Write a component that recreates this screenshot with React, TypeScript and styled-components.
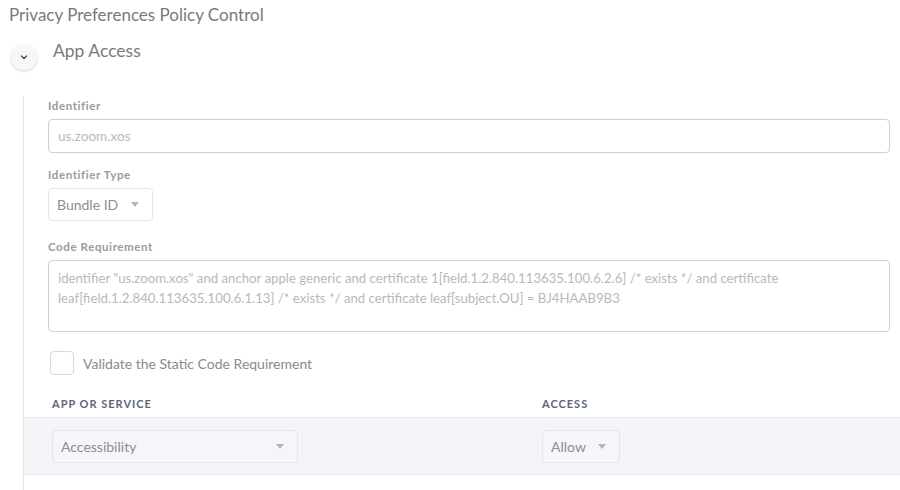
import styled, { createGlobalStyle } from 'styled-components';

const GlobalStyle = createGlobalStyle`
  body {
    margin: 0;
    background: #fff;
    font-family: Lato, 'Open Sans', sans-serif;
    color: #777;
  }
`;

const Page = styled.div`
  width: 900px;
  height: 490px;
  overflow: hidden;
`;

const Title = styled.div`
  padding: 4px 0 0 9px;
  height: 22px;
  font-size: 17px;
  line-height: 22px;
  color: #7a7a7a;
`;

const SectionHead = styled.div`
  display: flex;
  align-items: center;
  gap: 16px;
  margin-top: 16px;
  padding-left: 11px;
  height: 26px;
  span {
    font-size: 17.5px;
    color: #7a7a7a;
    margin-top: -10px;
  }
`;

const Toggle = styled.button`
  width: 26px;
  height: 26px;
  margin-top: 4px;
  border-radius: 50%;
  border: none;
  padding: 0;
  background: #f7f7f8;
  box-shadow: 0 1px 3px rgba(0, 0, 0, 0.18);
  display: flex;
  align-items: center;
  justify-content: center;
  cursor: pointer;
`;

const Panel = styled.div`
  margin: 29px 0 0 23px;
  border-left: 1px solid #e4e4e4;
  padding-top: 2px;
  height: 400px;
`;

const Fields = styled.div`
  padding: 0 10px 0 24px;
`;

const Label = styled.div`
  font-size: 11.5px;
  font-weight: 700;
  letter-spacing: 0.6px;
  color: #9b9b9b;
  height: 14px;
  line-height: 14px;
  margin: 0 0 6px;
`;

const Field = styled.div<{ gap?: number }>`
  margin-bottom: ${p => p.gap ?? 0}px;
`;

const Input = styled.div`
  height: 34px;
  box-sizing: border-box;
  border: 1px solid #cfcfcf;
  border-radius: 4px;
  padding: 0 9px;
  display: flex;
  align-items: center;
  font-size: 13.6px;
  color: #b9b9b9;
`;

const TextArea = styled.div`
  height: 72px;
  box-sizing: border-box;
  border: 1px solid #cfcfcf;
  border-radius: 4px;
  padding: 7px 9px;
  font-size: 13.2px;
  line-height: 20px;
  color: #b9b9b9;
`;

const Select = styled.div<{ w: number; tinted?: boolean }>`
  width: ${p => p.w}px;
  height: 33px;
  box-sizing: border-box;
  border: 1px solid #e6e6e9;
  border-radius: 4px;
  background: ${p => (p.tinted ? '#f5f6f9' : '#fff')};
  padding: 0 13px 0 8px;
  display: flex;
  align-items: center;
  justify-content: space-between;
  font-size: 14px;
  color: #8e8e8e;
  &::after {
    content: '';
    border-left: 4px solid transparent;
    border-right: 4px solid transparent;
    border-top: 5px solid #b5b5b5;
  }
`;

const CheckRow = styled.label`
  display: flex;
  align-items: center;
  gap: 9px;
  margin: 19px 0 0 2px;
  font-size: 14px;
  color: #8a8a8a;
`;

const Box = styled.span`
  width: 24px;
  height: 24px;
  box-sizing: border-box;
  border: 1px solid #d9d9d9;
  border-radius: 4px;
  background: #fff;
`;

const TableHead = styled.div`
  display: grid;
  grid-template-columns: 490px 1fr;
  padding: 22px 0 0 28px;
  height: 20px;
  div {
    font-size: 11px;
    font-weight: 700;
    letter-spacing: 1px;
    color: #5d6579;
  }
`;

const TableRow = styled.div`
  display: grid;
  grid-template-columns: 490px 1fr;
  align-items: center;
  padding-left: 28px;
  height: 56px;
  background: #f4f5f8;
  border-top: 1px solid #e6e8ec;
  border-bottom: 1px solid #e6e8ec;
`;

const Chevron = () => (
  <svg width="10" height="10" viewBox="0 0 10 10" fill="none">
    <path d="M2.5 4l2.5 2.5L7.5 4" stroke="#444" strokeWidth="1.3" strokeLinecap="round" strokeLinejoin="round" />
  </svg>
);

export default function App() {
  return (
    <Page>
      <GlobalStyle />
      <Title>Privacy Preferences Policy Control</Title>
      <SectionHead>
        <Toggle aria-label="collapse">
          <Chevron />
        </Toggle>
        <span>App Access</span>
      </SectionHead>
      <Panel>
        <Fields>
          <Field gap={15}>
            <Label>Identifier</Label>
            <Input>us.zoom.xos</Input>
          </Field>
          <Field gap={19}>
            <Label>Identifier Type</Label>
            <Select w={105}>Bundle ID</Select>
          </Field>
          <Field>
            <Label>Code Requirement</Label>
            <TextArea>
              identifier "us.zoom.xos" and anchor apple generic and certificate 1[field.1.2.840.113635.100.6.2.6] /* exists */ and certificate leaf[field.1.2.840.113635.100.6.1.13] /* exists */ and certificate leaf[subject.OU] = BJ4HAAB9B3
            </TextArea>
          </Field>
          <CheckRow>
            <Box />
            Validate the Static Code Requirement
          </CheckRow>
        </Fields>
        <TableHead>
          <div>APP OR SERVICE</div>
          <div>ACCESS</div>
        </TableHead>
        <TableRow>
          <Select w={246} tinted>Accessibility</Select>
          <Select w={78} tinted>Allow</Select>
        </TableRow>
      </Panel>
    </Page>
  );
}
